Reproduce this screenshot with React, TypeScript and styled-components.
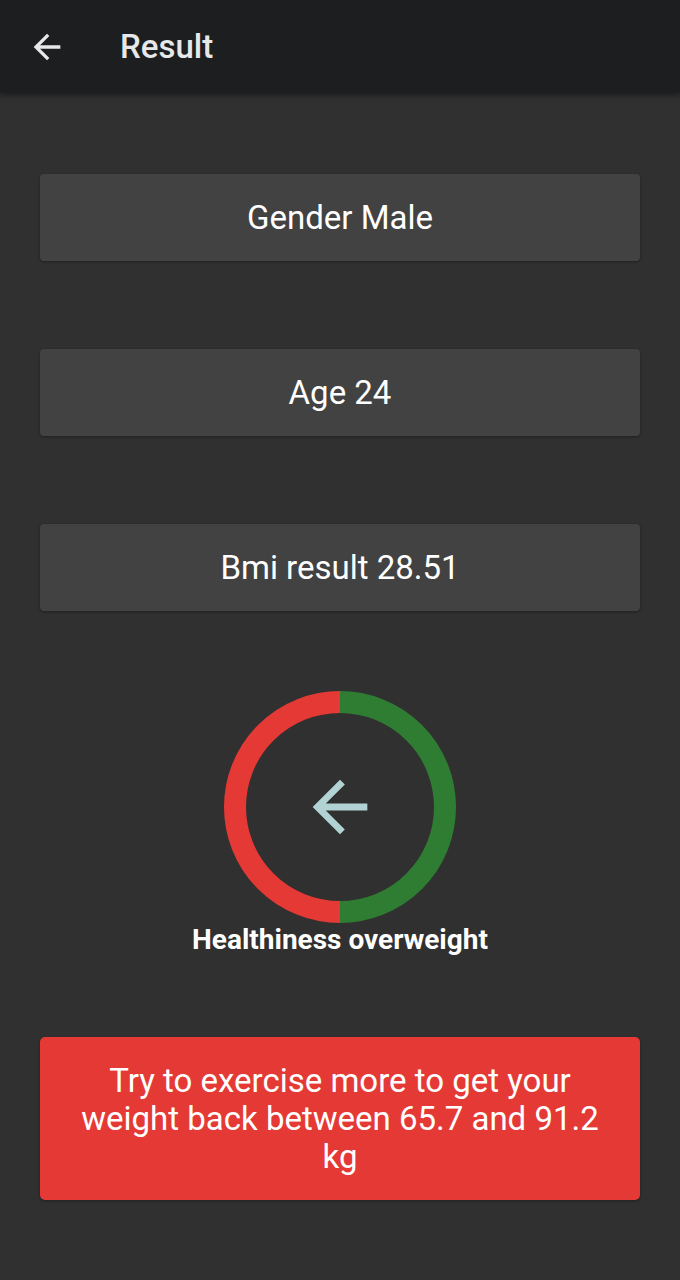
import React from "react";
import styled, { createGlobalStyle } from "styled-components";

const Global = createGlobalStyle`
  html, body { margin: 0; padding: 0; background: #303030; }
  body { font-family: Roboto, "Liberation Sans", sans-serif; }
  * { box-sizing: border-box; }
`;

const Page = styled.div`
  width: 680px;
  min-height: 1280px;
  background: #303030;
  display: flex;
  flex-direction: column;
`;

const AppBar = styled.header`
  height: 93px;
  background: #1c1e1f;
  display: flex;
  align-items: center;
  padding-left: 27px;
  box-shadow: 0 2px 6px rgba(0, 0, 0, 0.45);
  position: relative;
  z-index: 1;
`;

const BackButton = styled.div`
  width: 40px;
  height: 40px;
  display: flex;
  align-items: center;
  justify-content: center;
  margin-right: 53px;
`;

const Title = styled.h1`
  margin: 0;
  font-size: 33px;
  font-weight: 500;
  color: #e6e8e9;
`;

const Main = styled.main`
  display: flex;
  flex-direction: column;
  align-items: center;
  padding: 81px 40px 0;
`;

const InfoCard = styled.div<{ $gapAfter: number }>`
  width: 600px;
  height: 87px;
  background: #424242;
  border-radius: 4px;
  box-shadow: 0 1px 3px rgba(0, 0, 0, 0.35);
  display: flex;
  align-items: center;
  justify-content: center;
  color: #ffffff;
  font-size: 33px;
  margin-bottom: ${(p) => p.$gapAfter}px;
`;

const Gauge = styled.div`
  width: 232px;
  height: 232px;
  position: relative;
  display: flex;
  align-items: center;
  justify-content: center;
`;

const GaugeRing = styled.svg`
  position: absolute;
  inset: 0;
`;

const Status = styled.div`
  margin-top: 0px;
  color: #ffffff;
  font-size: 28px;
  font-weight: 700;
  line-height: 34px;
`;

const AdviceCard = styled.div`
  margin-top: 80px;
  width: 600px;
  height: 163px;
  background: #e53935;
  border-radius: 5px;
  box-shadow: 0 1px 3px rgba(0, 0, 0, 0.35);
  display: flex;
  align-items: center;
  justify-content: center;
  padding: 0 36px;
  text-align: center;
  color: #ffffff;
  font-size: 33px;
  line-height: 38px;
`;

const ArrowBack = ({ size, color }: { size: number; color: string }) => (
  <svg width={size} height={size} viewBox="0 0 24 24">
    <path fill={color} d="M20 11H7.83l5.59-5.59L12 4l-8 8 8 8 1.41-1.41L7.83 13H20v-2z" />
  </svg>
);

export default function App() {
  const r = 105;
  return (
    <Page>
      <Global />
      <AppBar>
        <BackButton>
          <ArrowBack size={40} color="#e6e8e9" />
        </BackButton>
        <Title>Result</Title>
      </AppBar>
      <Main>
        <InfoCard $gapAfter={88}>Gender Male</InfoCard>
        <InfoCard $gapAfter={88}>Age 24</InfoCard>
        <InfoCard $gapAfter={80}>Bmi result 28.51</InfoCard>
        <Gauge>
          <GaugeRing width={232} height={232} viewBox="0 0 232 232">
            <path
              d={`M116 ${116 - r} A ${r} ${r} 0 0 0 116 ${116 + r}`}
              fill="none"
              stroke="#e53935"
              strokeWidth={22}
            />
            <path
              d={`M116 ${116 - r} A ${r} ${r} 0 0 1 116 ${116 + r}`}
              fill="none"
              stroke="#2e7d32"
              strokeWidth={22}
            />
          </GaugeRing>
          <ArrowBack size={82} color="#b2d3d3" />
        </Gauge>
        <Status>Healthiness overweight</Status>
        <AdviceCard>Try to exercise more to get your weight back between 65.7 and 91.2 kg</AdviceCard>
      </Main>
    </Page>
  );
}
